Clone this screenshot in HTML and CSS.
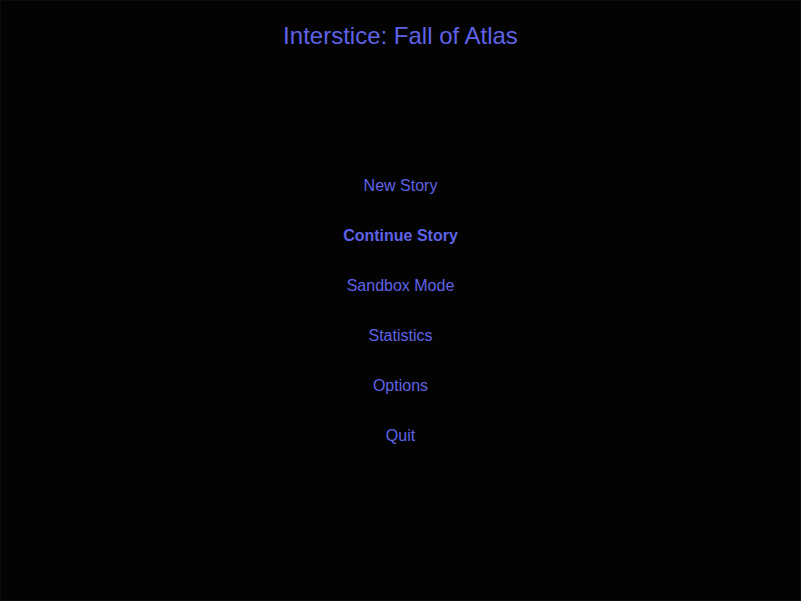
FILE: index.html
```html
<!DOCTYPE html>
<html>
<head>
<meta charset="utf-8">
<link rel="stylesheet" href="styles.css">
</head>
<body>
<div class="screen">
  <h1 class="title">Interstice: Fall of Atlas</h1>
  <ul class="menu">
    <li class="item">New Story</li>
    <li class="item active">Continue Story</li>
    <li class="item">Sandbox Mode</li>
    <li class="item">Statistics</li>
    <li class="item">Options</li>
    <li class="item">Quit</li>
  </ul>
</div>
</body>
</html>
```
FILE: styles.css
```css
html, body {
  margin: 0;
  padding: 0;
  background: #030303;
}
.screen {
  box-sizing: border-box;
  width: 801px;
  height: 601px;
  border: 1px solid #0c0c0c;
  background: #030303;
  font-family: "Liberation Sans", Arial, sans-serif;
  color: #5f62e6;
  display: flex;
  flex-direction: column;
  align-items: center;
}
.title {
  margin: 20px 0 0;
  font-size: 24px;
  font-weight: normal;
  line-height: 30px;
}
.menu {
  list-style: none;
  margin: 126px 0 0;
  padding: 0;
  display: flex;
  flex-direction: column;
  align-items: center;
  gap: 32px;
}
.item {
  font-size: 16px;
  line-height: 18px;
}
.active {
  font-weight: bold;
}
```
